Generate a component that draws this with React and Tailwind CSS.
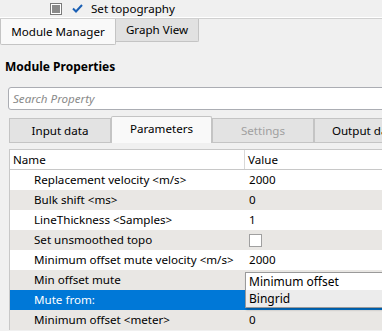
import React from 'react';

const rows = [
  { name: 'Replacement velocity <m/s>', value: '2000' },
  { name: 'Bulk shift <ms>', value: '0' },
  { name: 'LineThickness <Samples>', value: '1' },
  { name: 'Set unsmoothed topo', check: true },
  { name: 'Minimum offset mute velocity <m/s>', value: '2000' },
  { name: 'Min offset mute', value: '' },
  { name: 'Mute from:', value: '', selected: true },
  { name: 'Minimum offset <meter>', value: '0' },
];

const font = { fontFamily: '"Noto Sans", "Segoe UI", sans-serif' };

export default function App() {
  return (
    <div className="w-[382px] h-[331px] overflow-hidden bg-[#f0f0f0] text-[11.6px] text-black relative" style={font}>
      {/* Tree row */}
      <div className="h-[17px] flex items-center">
        <div className="ml-[50px] w-[12px] h-[12px] border border-[#7a7a7a] bg-white flex items-center justify-center">
          <div className="w-[8px] h-[8px] bg-[#8a8a8a]" />
        </div>
        <svg className="ml-[10px]" width="11" height="9" viewBox="0 0 11 9">
          <path d="M1 4.5 L4 7.5 L10 1" fill="none" stroke="#1a5fb4" strokeWidth="2" />
        </svg>
        <span className="ml-[8px]">Set topography</span>
      </div>
      <div className="h-[2px] bg-white border-b border-[#d0d0d0]" />

      {/* Bottom tabs */}
      <div className="h-[26px] flex items-start">
        <div className="w-[116px] shrink-0 h-[26px] bg-[#f9f9f9] border border-t-0 border-[#c4c4c4] rounded-b-[2px] flex items-center justify-center">
          Module Manager
        </div>
        <div className="w-[83px] shrink-0 h-[23px] bg-[#e1e1e1] border border-t-0 border-l-0 border-[#c4c4c4] rounded-br-[2px] flex items-center justify-center">
          Graph View
        </div>
      </div>

      {/* Module properties */}
      <div className="pl-[5px] pt-[13px] h-[42px] font-bold text-[12px]">Module Properties</div>

      <div className="ml-[8px] w-[400px] h-[23px] bg-white border border-[#abadb3] rounded-[3px] flex items-center pl-[4px] italic text-[#8a8a8a]">
        Search Property
      </div>

      {/* Param tabs */}
      <div className="ml-[9px] mt-[6px] h-[27px] flex items-end">
        <div className="w-[102px] shrink-0 h-[25px] bg-[#e3e3e3] border border-[#c4c4c4] flex items-center justify-center">Input data</div>
        <div className="w-[101px] shrink-0 h-[27px] bg-[#f9f9f9] border border-b-0 border-[#c4c4c4] rounded-t-[2px] flex items-center justify-center pb-[3px]">Parameters</div>
        <div className="w-[102px] shrink-0 h-[25px] bg-[#e3e3e3] border border-[#c4c4c4] flex items-center justify-center text-[#a0a0a0]">Settings</div>
        <div className="w-[102px] shrink-0 h-[25px] bg-[#e3e3e3] border border-[#c4c4c4] flex items-center justify-center">Output data</div>
      </div>

      {/* Table */}
      <div className="ml-[9px] mt-[6px] border-l border-t border-[#c8c8c8] bg-white">
        <div className="h-[20px] flex border-b border-[#c8c8c8] bg-white">
          <div className="w-[235px] shrink-0 border-r border-[#d8d8d8] pl-[3px] flex items-center">Name</div>
          <div className="flex-1 pl-[3px] flex items-center">Value</div>
        </div>
        {rows.map((r, i) => (
          <div
            key={i}
            className={`h-[20px] flex ${r.selected ? 'bg-[#0078d7] text-white' : i % 2 ? 'bg-[#e9e7e4]' : 'bg-white'}`}
          >
            <div className="w-[235px] shrink-0 pl-[24px] flex items-center whitespace-nowrap">{r.name}</div>
            <div className="flex-1 pl-[4px] flex items-center">
              {r.check ? <div className="w-[13px] h-[13px] bg-white border border-[#a0a0a0]" /> : r.value}
            </div>
          </div>
        ))}
      </div>

      {/* Dropdown popup */}
      <div className="absolute left-[245px] top-[272px] w-[140px] bg-white border border-[#9a9a9a] shadow-[1px_2px_2px_rgba(0,0,0,0.25)] text-[12px]">
        <div className="h-[17px] flex items-center pl-[3px]">Minimum offset</div>
        <div className="h-[17px] bg-[#ececec] flex items-center pl-[3px]">Bingrid</div>
      </div>
    </div>
  );
}
